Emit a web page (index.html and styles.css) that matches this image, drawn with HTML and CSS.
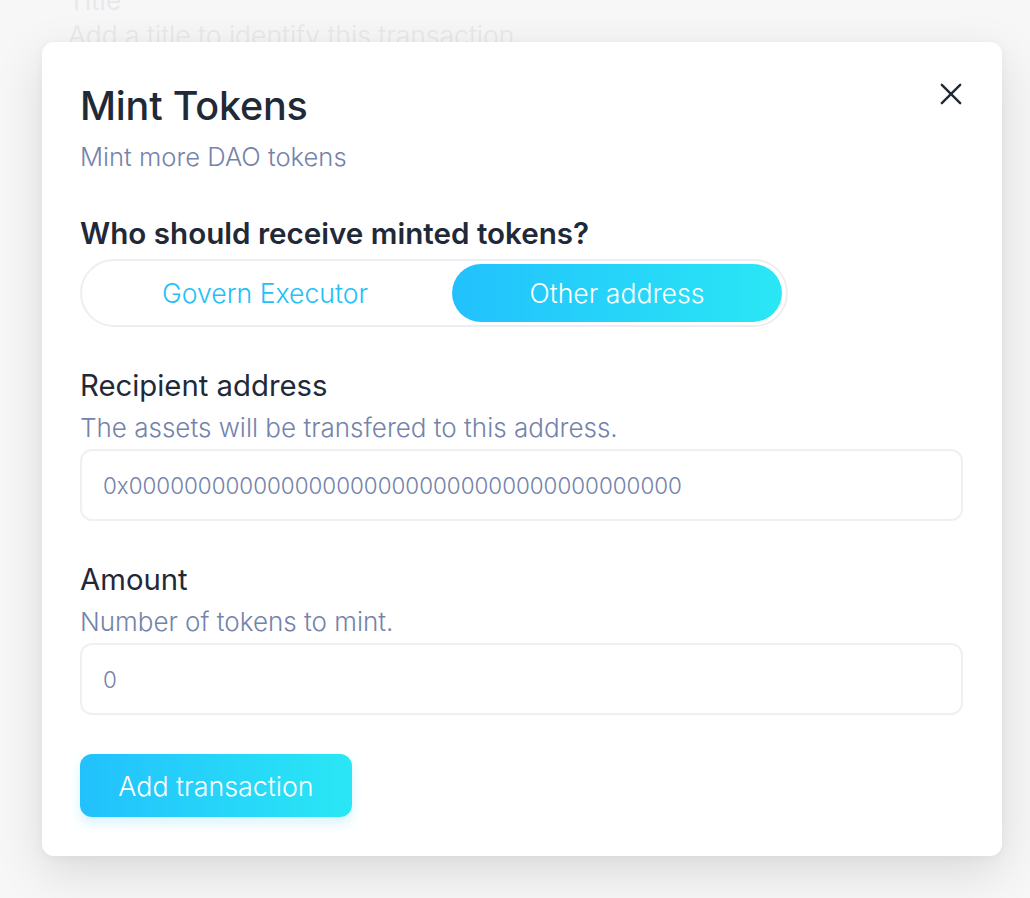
FILE: index.html
```html
<!DOCTYPE html>
<html>
<head>
<meta charset="utf-8">
<link rel="stylesheet" href="styles.css">
</head>
<body>
<div class="backdrop">
  <div class="bg-label">Title</div>
  <div class="bg-placeholder">Add a title to identify this transaction</div>
</div>
<div class="modal">
  <button class="close" aria-label="Close">
    <svg width="24" height="24" viewBox="0 0 24 24"><path d="M2 2 L22 22 M22 2 L2 22" stroke="#1f2937" stroke-width="2.6" stroke-linecap="round" fill="none"/></svg>
  </button>
  <h1 class="title">Mint Tokens</h1>
  <p class="subtitle">Mint more DAO tokens</p>
  <h2 class="question">Who should receive minted tokens?</h2>
  <div class="toggle">
    <div class="opt">Govern Executor</div>
    <div class="opt active">Other address</div>
  </div>
  <div class="field">
    <div class="label">Recipient address</div>
    <div class="hint">The assets will be transfered to this address.</div>
    <div class="input">0x0000000000000000000000000000000000000000</div>
  </div>
  <div class="field">
    <div class="label">Amount</div>
    <div class="hint">Number of tokens to mint.</div>
    <div class="input">0</div>
  </div>
  <button class="primary">Add transaction</button>
</div>
</body>
</html>
```
FILE: styles.css
```css
* { box-sizing: border-box; }
html, body { margin: 0; padding: 0; }
body {
  width: 1030px;
  height: 898px;
  overflow: hidden;
  background: #f7f7f8;
  font-family: "Inter", "Noto Sans", sans-serif;
  position: relative;
}
.backdrop {
  padding: 0 0 0 68px;
  color: #e8e9ec;
}
.bg-label {
  font-size: 26px;
  line-height: 26px;
  margin-top: -12px;
  font-weight: 400;
}
.bg-placeholder {
  font-size: 26.5px;
  line-height: 34px;
  margin-top: 4px;
  font-weight: 300;
}
.modal {
  position: absolute;
  left: 42px;
  top: 42px;
  width: 960px;
  height: 814px;
  background: #fff;
  border-radius: 12px;
  box-shadow: 0 16px 50px rgba(0,0,0,0.12), 0 2px 10px rgba(0,0,0,0.04);
  padding: 38px 39px 0 38px;
  display: flex;
  flex-direction: column;
  align-items: flex-start;
}
.close {
  position: absolute;
  right: 40px;
  top: 41px;
  width: 22px;
  height: 22px;
  padding: 0;
  border: 0;
  background: none;
  display: flex;
}
.close svg { width: 22px; height: 22px; }
.title {
  margin: 0;
  font-size: 39.5px;
  line-height: 52px;
  font-weight: 500;
  color: #1f2937;
  letter-spacing: -0.2px;
}
.subtitle {
  margin: 9px 0 0;
  font-size: 25.6px;
  line-height: 32px;
  font-weight: 300;
  color: #7483ab;
}
.question {
  margin: 42px 0 0;
  font-size: 29.6px;
  line-height: 36px;
  font-weight: 600;
  color: #1f2937;
}
.toggle {
  margin-top: 8px;
  width: 708px;
  height: 68px;
  border: 2px solid #eceef3;
  border-radius: 34px;
  padding: 3px 4px 3px 4px;
  display: flex;
}
.opt {
  flex: 1 1 0;
  display: flex;
  align-items: center;
  justify-content: center;
  font-size: 26.6px;
  font-weight: 300;
  color: #22bff8;
  border-radius: 30px;
}
.opt:first-child { flex: 0 0 366px; padding-right: 8px; }
.opt.active {
  color: #fff;
  background: linear-gradient(90deg, #22c1fd 0%, #2ae7f5 100%);
}
.field {
  width: 100%;
  margin-top: 41px;
}
.label {
  font-size: 29.3px;
  line-height: 36px;
  font-weight: 400;
  color: #1f2937;
}
.hint {
  font-size: 26px;
  line-height: 36px;
  font-weight: 300;
  color: #7483ab;
  margin-top: 6px;
}
.input {
  margin-top: 3px;
  width: 100%;
  height: 72px;
  border: 2px solid #eef0f4;
  border-radius: 12px;
  padding: 0 21px;
  display: flex;
  align-items: center;
  font-size: 22.4px;
  font-weight: 300;
  color: #7483ab;
}
.primary {
  margin-top: 39px;
  width: 272px;
  height: 63px;
  border: 0;
  border-radius: 12px;
  background: linear-gradient(90deg, #22c1fd 0%, #2ae7f5 100%);
  box-shadow: 0 6px 12px rgba(34, 193, 253, 0.18);
  color: #fff;
  font-family: inherit;
  font-size: 26.8px;
  font-weight: 300;
  padding: 0;
}
```
